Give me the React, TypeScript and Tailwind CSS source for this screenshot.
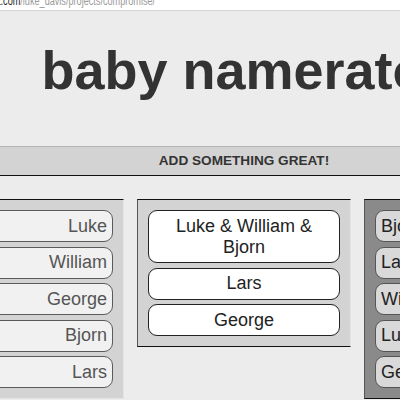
const LEFT = ['Luke', 'William', 'George', 'Bjorn', 'Lars'];
const MIDDLE = ['Luke & William & Bjorn', 'Lars', 'George'];
const RIGHT = ['Bjorn', 'Lars', 'William', 'Luke', 'George'];

const panel = 'w-[214px] shrink-0 flex flex-col gap-[4.5px] p-[10px] border border-t-[#111] border-b-[#111] border-l-[#555] border-r-[#e4e4e4]';
const item = 'min-h-[32px] rounded-[9px] border text-[18px] leading-[21px] py-[4.5px]';

export default function App() {
  return (
    <div className="w-[400px] h-[400px] overflow-hidden bg-[#ececec] font-['Liberation_Sans',Arial,sans-serif]">
      {/* browser address bar, cropped */}
      <div className="h-[11px] bg-white overflow-hidden border-b border-[#d4d4d4]">
        <div className="-mt-[5.5px] -ml-[2px] text-[12px] leading-[12px] whitespace-nowrap origin-left scale-x-[0.76]">
          <span className="text-[#222]">t.com</span>
          <span className="text-[#9a9a9a]">/luke_davis/projects/compromise/</span>
        </div>
      </div>

      <div className="w-[488px]">
        <header className="h-[135px] flex justify-center pt-[32px]">
          <h1 className="text-[54px] leading-[54px] font-bold text-[#333] whitespace-nowrap">baby namerator</h1>
        </header>

        <div className="h-[30px] flex items-center justify-center bg-[#d3d3d3] border-t border-t-[#b4b4b4] border-b border-b-[#111]">
          <span className="text-[13.6px] font-bold text-[#333]">ADD SOMETHING GREAT!</span>
        </div>

        <div className="mt-[23px] flex justify-center items-start gap-[13px]">
          <div className={`${panel} bg-[#d3d3d3] border-b-[#e4e4e4]`}>
            {LEFT.map((n) => (
              <div key={n} className={`${item} bg-[#f1f1f1] border-[#5a5a5a] text-[#555] text-right pr-[5px]`}>
                {n}
              </div>
            ))}
          </div>

          <div className={`${panel} bg-[#d3d3d3]`}>
            {MIDDLE.map((n) => (
              <div key={n} className={`${item} bg-white border-[#222] text-[#222] text-center px-[8px]`}>
                {n}
              </div>
            ))}
          </div>

          <div className={`${panel} bg-[#8a8a8a] border-l-[#444]`}>
            {RIGHT.map((n) => (
              <div key={n} className={`${item} bg-[#d9d9d9] border-[#555] text-[#222] text-left pl-[5px]`}>
                {n}
              </div>
            ))}
          </div>
        </div>
      </div>
    </div>
  );
}
